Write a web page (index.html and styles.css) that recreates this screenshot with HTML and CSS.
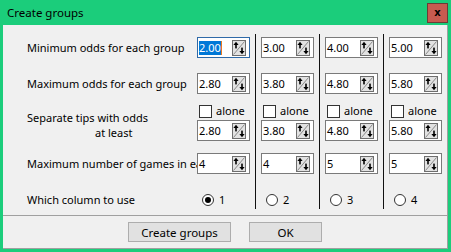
FILE: index.html
```html
<!DOCTYPE html>
<html lang="en">

<head>
    <meta charset="UTF-8">
    <title>Create groups</title>
    <link rel="stylesheet" href="styles.css">
</head>

<body>
    <svg class="defs" width="0" height="0">
        <symbol id="spin" viewBox="0 0 14 16">
            <rect x="0.5" y="0.5" width="13" height="15" fill="#e2e2e2" stroke="#6e6e6e" />
            <path d="M1.5 14.5 L12.5 1.5" stroke="#8a8a8a" fill="none" />
            <path d="M4 1.8 L1.4 5 H6.6 Z" fill="#000" />
            <rect x="3.2" y="4.8" width="1.6" height="3.6" fill="#000" />
            <rect x="9.2" y="7.6" width="1.6" height="3.6" fill="#000" />
            <path d="M10 14.2 L7.4 11 H12.6 Z" fill="#000" />
        </symbol>
    </svg>

    <div class="window">
        <div class="titlebar">
            <span class="title">Create groups</span>
            <button class="close">x</button>
        </div>

        <div class="client">
            <div class="form">
                <!-- minimum odds -->
                <div class="label">Minimum odds for each group</div>
                <div class="cell"><div class="spin focus"><span class="sel">2.00</span><svg class="arrows"><use href="#spin" /></svg></div></div>
                <div class="cell sep"><div class="spin"><span>3.00</span><svg class="arrows"><use href="#spin" /></svg></div></div>
                <div class="cell sep"><div class="spin"><span>4.00</span><svg class="arrows"><use href="#spin" /></svg></div></div>
                <div class="cell sep"><div class="spin"><span>5.00</span><svg class="arrows"><use href="#spin" /></svg></div></div>

                <!-- maximum odds -->
                <div class="label">Maximum odds for each group</div>
                <div class="cell"><div class="spin"><span>2.80</span><svg class="arrows"><use href="#spin" /></svg></div></div>
                <div class="cell sep"><div class="spin"><span>3.80</span><svg class="arrows"><use href="#spin" /></svg></div></div>
                <div class="cell sep"><div class="spin"><span>4.80</span><svg class="arrows"><use href="#spin" /></svg></div></div>
                <div class="cell sep"><div class="spin"><span>5.80</span><svg class="arrows"><use href="#spin" /></svg></div></div>

                <!-- separate tips -->
                <div class="label two-line">Separate tips with odds<br><span class="indent">at least</span></div>
                <div class="cell">
                    <label class="check"><span class="box"></span>alone</label>
                    <div class="spin"><span>2.80</span><svg class="arrows"><use href="#spin" /></svg></div>
                </div>
                <div class="cell sep">
                    <label class="check"><span class="box"></span>alone</label>
                    <div class="spin"><span>3.80</span><svg class="arrows"><use href="#spin" /></svg></div>
                </div>
                <div class="cell sep">
                    <label class="check"><span class="box"></span>alone</label>
                    <div class="spin"><span>4.80</span><svg class="arrows"><use href="#spin" /></svg></div>
                </div>
                <div class="cell sep">
                    <label class="check"><span class="box"></span>alone</label>
                    <div class="spin"><span>5.80</span><svg class="arrows"><use href="#spin" /></svg></div>
                </div>

                <!-- number of games -->
                <div class="label">Maximum number of games in ea</div>
                <div class="cell"><div class="spin"><span>4</span><svg class="arrows"><use href="#spin" /></svg></div></div>
                <div class="cell sep"><div class="spin"><span>4</span><svg class="arrows"><use href="#spin" /></svg></div></div>
                <div class="cell sep"><div class="spin"><span>5</span><svg class="arrows"><use href="#spin" /></svg></div></div>
                <div class="cell sep"><div class="spin"><span>5</span><svg class="arrows"><use href="#spin" /></svg></div></div>

                <!-- column choice -->
                <div class="label">Which column to use</div>
                <div class="cell radio-cell"><label class="radio"><span class="dot checked"></span>1</label></div>
                <div class="cell sep radio-cell"><label class="radio"><span class="dot"></span>2</label></div>
                <div class="cell sep radio-cell"><label class="radio"><span class="dot"></span>3</label></div>
                <div class="cell sep radio-cell"><label class="radio"><span class="dot"></span>4</label></div>
            </div>

            <div class="buttons">
                <button class="btn wide">Create groups</button>
                <button class="btn">OK</button>
            </div>
        </div>
    </div>
</body>

</html>
```

FILE: styles.css
```css
body {
    margin: 0;
    font-family: "Noto Sans", sans-serif;
    font-size: 11px;
    color: #000;
}

.defs {
    position: absolute;
}

.window {
    width: 451px;
    height: 252px;
    box-sizing: border-box;
    background-color: #1bcd7b;
    padding: 0 3px 3px 3px;
    display: flex;
    flex-direction: column;
}

.titlebar {
    height: 25px;
    display: flex;
    justify-content: space-between;
    align-items: flex-start;
}

.title {
    padding: 5px 0 0 4px;
    font-size: 11.5px;
    line-height: 16px;
}

.close {
    width: 21px;
    height: 20px;
    margin-top: 3px;
    padding: 0;
    background-color: #c75b50;
    border: 1px solid #6b3c36;
    font-family: "DejaVu Sans", sans-serif;
    font-weight: bold;
    font-size: 10px;
    line-height: 16px;
    color: #000;
}

.client {
    flex: 1;
    background-color: #f0f0f0;
    border-right: 1px solid #a0a0a0;
    border-bottom: 1px solid #a0a0a0;
    padding-top: 9px;
    display: flex;
    flex-direction: column;
}

.form {
    display: grid;
    grid-template-columns: 194px 58px 64px 64px 64px;
    grid-template-rows: 36px 31px 49px 36px 23px;
}

.label {
    padding: 3px 0 0 24px;
    line-height: 21px;
    white-space: nowrap;
    overflow: hidden;
}

.label.two-line {
    padding-top: 9px;
    line-height: 15px;
}

.indent {
    padding-left: 68px;
}

.cell {
    padding-top: 3px;
}

.cell.sep {
    border-left: 1px solid #111;
    padding-left: 5px;
}

.spin {
    width: 53px;
    height: 21px;
    box-sizing: border-box;
    background-color: #fff;
    border: 1px solid #7a7a7a;
    padding: 0 3px 0 1px;
    display: flex;
    justify-content: space-between;
    align-items: center;
}

.spin.focus {
    border-color: #2f6aa8;
}

.spin span {
    line-height: 14px;
}

.sel {
    background-color: #0078d7;
    color: #fff;
    border-right: 1px solid #e87722;
}

.arrows {
    width: 14px;
    height: 16px;
}

.check {
    height: 14px;
    margin: 0 0 2px 2px;
    display: flex;
    align-items: center;
    gap: 4px;
    line-height: 14px;
}

.box {
    width: 13px;
    height: 13px;
    box-sizing: border-box;
    background-color: #fff;
    border: 1px solid #333;
}

.radio-cell {
    padding-top: 6px;
}

.radio {
    margin-left: 5px;
    display: flex;
    align-items: center;
    gap: 5px;
    line-height: 13px;
    padding-top: 1px;
}

.dot {
    width: 12px;
    height: 12px;
    box-sizing: border-box;
    border-radius: 50%;
    background-color: #fff;
    border: 1px solid #333;
    display: flex;
    justify-content: center;
    align-items: center;
}

.dot.checked::after {
    content: "";
    width: 6px;
    height: 6px;
    border-radius: 50%;
    background-color: #000;
}

.buttons {
    margin-top: 6px;
    border-top: 1px solid #a0a0a0;
    padding-top: 6px;
    display: flex;
    justify-content: center;
    gap: 18px;
}

.btn {
    width: 73px;
    height: 20px;
    padding: 0;
    background-color: #e1e1e1;
    border: 1px solid #adadad;
    font-family: "Noto Sans", sans-serif;
    font-size: 11.5px;
    color: #000;
}

.btn.wide {
    width: 103px;
}
```
